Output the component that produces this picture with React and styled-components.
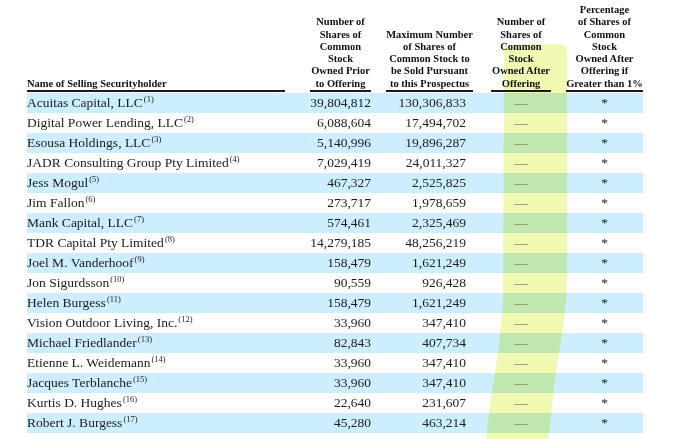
import React from 'react'
import styled, { createGlobalStyle } from 'styled-components'

const GlobalStyle = createGlobalStyle`
	html, body {
		margin: 0;
		padding: 0;
		background: #ffffff;
	}
`

const COLS = [
	{ w: 258, gap: 0, align: 'left', pr: 0 },
	{ w: 61, gap: 25, align: 'right', pr: 0 },
	{ w: 87, gap: 15, align: 'right', pr: 7 },
	{ w: 60, gap: 18, align: 'center', pr: 0 },
	{ w: 77, gap: 15, align: 'center', pr: 0 },
]

const HEADERS = [
	['Name of Selling Securityholder'],
	['Number of', 'Shares of', 'Common', 'Stock', 'Owned Prior', 'to Offering'],
	['Maximum Number', 'of Shares of', 'Common Stock to', 'be Sold Pursuant', 'to this Prospectus'],
	['Number of', 'Shares of', 'Common', 'Stock', 'Owned After', 'Offering'],
	['Percentage', 'of Shares of', 'Common', 'Stock', 'Owned After', 'Offering if', 'Greater than 1%'],
]

const ROWS = [
	['Acuitas Capital, LLC', 1, '39,804,812', '130,306,833'],
	['Digital Power Lending, LLC', 2, '6,088,604', '17,494,702'],
	['Esousa Holdings, LLC', 3, '5,140,996', '19,896,287'],
	['JADR Consulting Group Pty Limited', 4, '7,029,419', '24,011,327'],
	['Jess Mogul', 5, '467,327', '2,525,825'],
	['Jim Fallon', 6, '273,717', '1,978,659'],
	['Mank Capital, LLC', 7, '574,461', '2,325,469'],
	['TDR Capital Pty Limited', 8, '14,279,185', '48,256,219'],
	['Joel M. Vanderhoof', 9, '158,479', '1,621,249'],
	['Jon Sigurdsson', 10, '90,559', '926,428'],
	['Helen Burgess', 11, '158,479', '1,621,249'],
	['Vision Outdoor Living, Inc.', 12, '33,960', '347,410'],
	['Michael Friedlander', 13, '82,843', '407,734'],
	['Etienne L. Weidemann', 14, '33,960', '347,410'],
	['Jacques Terblanche', 15, '33,960', '347,410'],
	['Kurtis D. Hughes', 16, '22,640', '231,607'],
	['Robert J. Burgess', 17, '45,280', '463,214'],
]

const Page = styled.div`
	position: relative;
	width: 679px;
	height: 439px;
	overflow: hidden;
	background: #ffffff;
	font-family: 'Liberation Serif', 'Times New Roman', serif;
	color: #1c1c1c;
`

const Table = styled.div`
	display: flex;
	flex-direction: column;
	padding-left: 27px;
	width: 616px;
`

const HeadRow = styled.div`
	display: flex;
	align-items: flex-end;
	height: 92px;
	margin-bottom: 1px;
`

const HeadCell = styled.div`
	flex: none;
	width: ${(p) => p.$w}px;
	margin-left: ${(p) => p.$gap}px;
	text-align: ${(p) => (p.$align === 'left' ? 'left' : 'center')};
	font-size: 10.5px;
	line-height: 12.3px;
	font-weight: bold;
	color: #111111;
	border-bottom: 2px solid #1a1a1a;
	white-space: nowrap;
`

const Row = styled.div`
	display: flex;
	align-items: center;
	height: 20px;
	background: ${(p) => (p.$shaded ? '#cdeefe' : 'transparent')};
`

const Cell = styled.div`
	flex: none;
	width: ${(p) => p.$w}px;
	margin-left: ${(p) => p.$gap}px;
	padding-right: ${(p) => p.$pr}px;
	box-sizing: border-box;
	text-align: ${(p) => p.$align};
	font-size: 13.5px;
	line-height: 20px;
	white-space: nowrap;
`

const Note = styled.sup`
	font-size: 8.5px;
	line-height: 0;
	vertical-align: 5px;
	margin-left: 1px;
`

const Dash = styled.span`
	color: #7d7d7d;
`

const Marker = styled.svg`
	position: absolute;
	left: 0;
	top: 0;
	width: 679px;
	height: 439px;
	pointer-events: none;
	mix-blend-mode: multiply;
`

function Highlight() {
	return (
		<Marker viewBox='0 0 679 439'>
			<defs>
				<filter id='soft' x='-10%' y='-10%' width='120%' height='120%'>
					<feGaussianBlur stdDeviation='0.7' />
				</filter>
			</defs>
			<path
				filter='url(#soft)'
				fill='#f0f8b2'
				d='M510 45 L561 44 Q567 45 567 52 L567 285 C566 318 559 350 555 380 L548 442 L486 442 C489 405 495 375 499 345 L503 305 L504 52 Q504 46 510 45 Z'
			/>
		</Marker>
	)
}

export default function App() {
	return (
		<Page>
			<GlobalStyle />
			<Table>
				<HeadRow>
					{HEADERS.map((lines, i) => (
						<HeadCell key={i} $w={COLS[i].w} $gap={COLS[i].gap} $align={COLS[i].align}>
							{lines.map((l, j) => (
								<React.Fragment key={j}>
									{j > 0 && <br />}
									{l}
								</React.Fragment>
							))}
						</HeadCell>
					))}
				</HeadRow>
				{ROWS.map(([name, note, prior, max], i) => (
					<Row key={name} $shaded={i % 2 === 0}>
						<Cell $w={COLS[0].w} $gap={0} $pr={0} $align='left'>
							{name}
							<Note>({note})</Note>
						</Cell>
						<Cell $w={COLS[1].w} $gap={COLS[1].gap} $pr={COLS[1].pr} $align='right'>
							{prior}
						</Cell>
						<Cell $w={COLS[2].w} $gap={COLS[2].gap} $pr={COLS[2].pr} $align='right'>
							{max}
						</Cell>
						<Cell $w={COLS[3].w} $gap={COLS[3].gap} $pr={0} $align='center'>
							<Dash>—</Dash>
						</Cell>
						<Cell $w={COLS[4].w} $gap={COLS[4].gap} $pr={0} $align='center'>
							*
						</Cell>
					</Row>
				))}
			</Table>
			<Highlight />
		</Page>
	)
}
